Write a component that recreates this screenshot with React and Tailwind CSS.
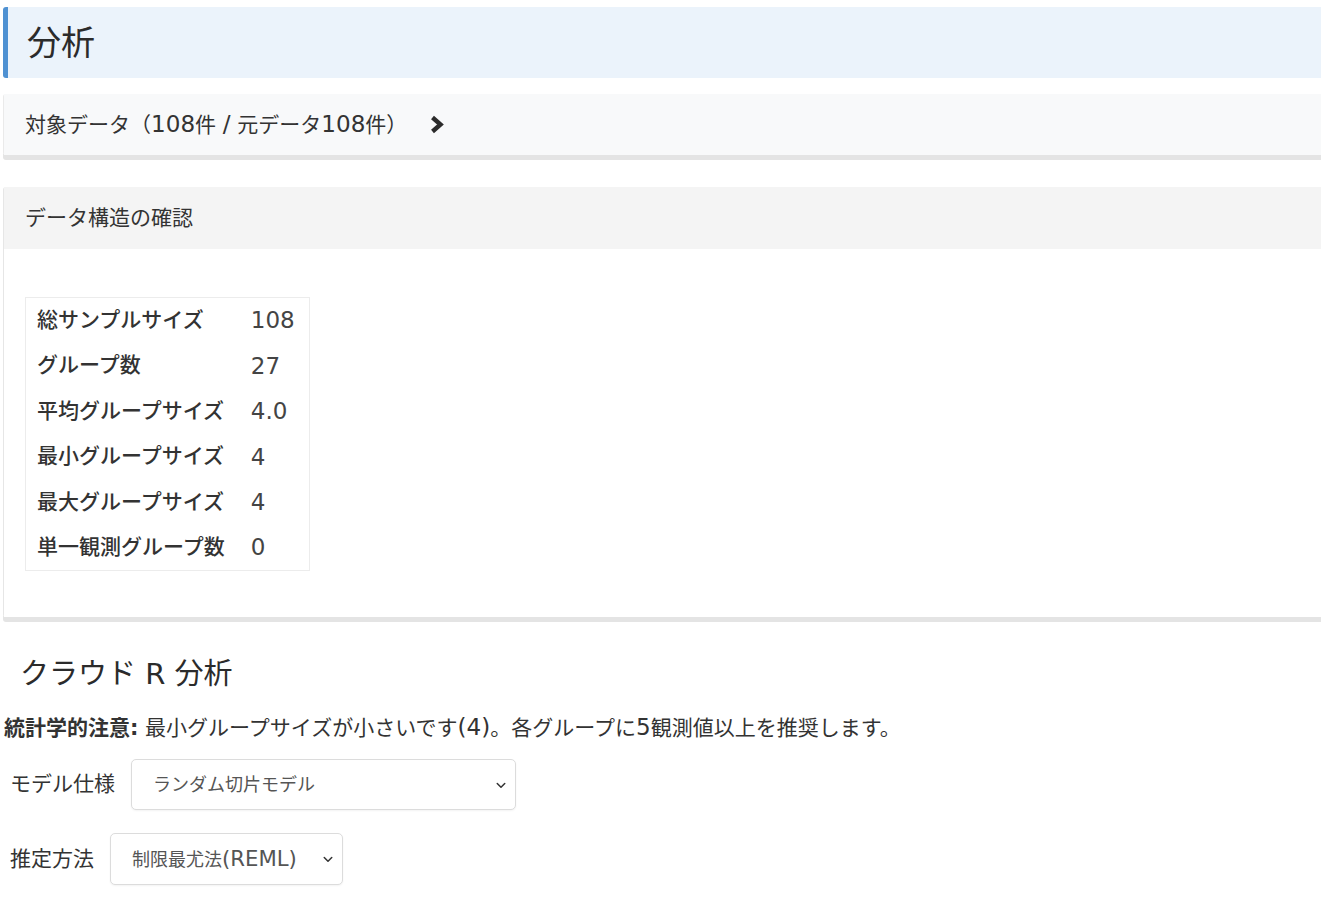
const stats = [
    ["総サンプルサイズ", "108"],
    ["グループ数", "27"],
    ["平均グループサイズ", "4.0"],
    ["最小グループサイズ", "4"],
    ["最大グループサイズ", "4"],
    ["単一観測グループ数", "0"],
];

// latin runs are set a bit larger so they sit like the reference's wide digits
const L = ({ children, className = "text-[1.1em]" }) => <span className={`${className} leading-none`}>{children}</span>;

const SelectBox = ({ children, className }) => (
    <div
        className={`flex items-center justify-between h-[51px] rounded-[5px] border border-[#dcdcdc] bg-white pl-[21px] pr-[8px] text-[18px] text-[#555] shadow-[0_1px_2px_rgba(0,0,0,0.05)] ${className}`}
    >
        <span>{children}</span>
        <svg width="12" height="12" viewBox="0 0 16 16" className="text-[#333]">
            <path d="M3 6l5 5 5-5" fill="none" stroke="currentColor" strokeWidth="2" strokeLinecap="round" strokeLinejoin="round" />
        </svg>
    </div>
);

const App = () => {
    return (
        <div
            className="min-h-[901px] overflow-hidden bg-white text-[#333]"
            style={{ fontFamily: '"DejaVu Sans", "Noto Sans CJK JP", sans-serif' }}
        >
            <div className="w-[1345px] pl-[3px] pt-[7px]">
                {/* page title */}
                <div className="h-[71px] flex items-center bg-[#ebf3fb] border-l-[5px] border-[#4f91d2] rounded-l-[3px] pl-[19px]">
                    <h1 className="text-[34px] leading-none text-[#2b2b2b]">分析</h1>
                </div>

                {/* target data */}
                <div className="mt-[16px] rounded-[3px] border-l border-[#eaeaea] shadow-[0_5px_0_#e4e4e4]">
                    <div className="h-[61px] flex items-center gap-[22px] bg-[#f8f9fa] pl-[21px]">
                        <span className="text-[21px] leading-none">
                            対象データ（<L>108</L>件 <L>/</L> 元データ<L>108</L>件）
                        </span>
                        <svg width="16" height="19" viewBox="0 0 16 19" className="text-[#2b2b2b]">
                            <path d="M3.5 2.5L11.5 9.5l-8 7" fill="none" stroke="currentColor" strokeWidth="4.4" strokeLinejoin="miter" />
                        </svg>
                    </div>
                </div>

                {/* data structure */}
                <div className="mt-[32px] rounded-[3px] border-l border-[#e6e6e6] shadow-[0_5px_0_#e4e4e4]">
                    <div className="h-[62px] flex items-center bg-[#f4f4f4] pl-[21px]">
                        <span className="text-[21px] leading-none">データ構造の確認</span>
                    </div>
                    <div className="bg-white pl-[21px] pt-[48px] pb-[46px]">
                        <table className="border-collapse border border-[#ececec] text-[21px]">
                            <tbody>
                                {stats.map(([label, value]) => (
                                    <tr key={label} className="h-[45.5px]">
                                        <td className="pl-[11px] pr-[26px] font-medium text-[#333] whitespace-nowrap">{label}</td>
                                        <td className="pr-[14px] text-[23px] text-[#444]">{value}</td>
                                    </tr>
                                ))}
                            </tbody>
                        </table>
                    </div>
                </div>

                {/* cloud R */}
                <h2 className="mt-[43px] ml-[17px] text-[29px] leading-none text-[#2b2b2b]">
                    クラウド <L className="text-[1em]">R</L> 分析
                </h2>

                <p className="mt-[27px] ml-[1px] text-[21px] leading-none">
                    <span className="font-bold">統計学的注意:</span> 最小グループサイズが小さいです<L>(4)</L>。各グループに<L>5</L>観測値以上を推奨します。
                </p>

                <div className="mt-[20px] ml-[7px] flex items-center gap-[16px]">
                    <label className="text-[21px] leading-none">モデル仕様</label>
                    <SelectBox className="w-[385px]">ランダム切片モデル</SelectBox>
                </div>

                <div className="mt-[23px] ml-[7px] flex items-center gap-[16px]">
                    <label className="text-[21px] leading-none">推定方法</label>
                    <SelectBox className="w-[233px] h-[52px]">
                        制限最尤法<L className="text-[1.18em]">(REML)</L>
                    </SelectBox>
                </div>
            </div>
        </div>
    );
};

export default App;
